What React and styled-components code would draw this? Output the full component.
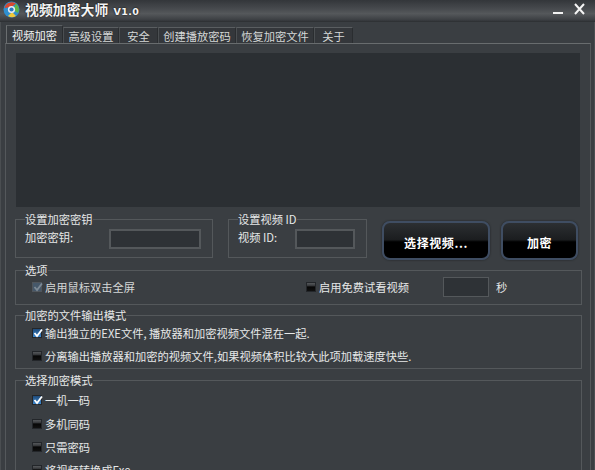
import React from "react";
import styled, { createGlobalStyle } from "styled-components";

const GlobalStyle = createGlobalStyle`
  html, body {
    margin: 0;
    padding: 0;
    background: #3a3e42;
  }
  body {
    width: 595px;
    height: 470px;
    overflow: hidden;
    font-family: "Noto Sans CJK SC", "Liberation Sans", sans-serif;
  }
`;

const Window = styled.div`
  width: 595px;
  height: 470px;
  overflow: hidden;
  background: #3a3e42;
  color: #e6e8e8;
  font-size: 11.25px;
`;

const TitleBar = styled.div`
  height: 22px;
  display: flex;
  align-items: flex-start;
  padding: 1px 0 0 3px;
  box-sizing: border-box;
  background: linear-gradient(#33363a 0, #474a4e 40%, #55585b 62%, #3c3f43 90%, #2b2e31 100%);
`;

const Title = styled.div`
  margin-left: 5px;
  font-size: 13.8px;
  line-height: 17px;
  font-weight: 700;
  letter-spacing: 0.1px;
  color: #f4f4f4;
  text-shadow: 0 0 2px #000;
  span {
    font-family: "DejaVu Sans", sans-serif;
    font-size: 9.5px;
    letter-spacing: 0.4px;
    margin-left: 5px;
  }
`;

const WindowButtons = styled.div`
  margin-left: auto;
  display: flex;
  align-items: flex-end;
  gap: 11px;
  padding: 2px 10px 0 0;
`;

const Body = styled.div`
  padding: 3px 4px 0 5px;
  box-shadow: inset 2px 0 0 -1px #4a4e51, inset -2px 0 0 -1px #4a4e51;
`;

const Tabs = styled.div`
  display: flex;
  align-items: flex-end;
  height: 18px;
  padding-left: 1px;
`;

const Tab = styled.div`
  height: ${(p) => (p.$active ? "18px" : "16px")};
  width: ${(p) => p.$w}px;
  box-sizing: border-box;
  display: flex;
  align-items: center;
  justify-content: center;
  font-size: 11.25px;
  white-space: nowrap;
  color: ${(p) => (p.$active ? "#f2f2f2" : "#d5d7d7")};
  background: ${(p) => (p.$active ? "#383c40" : "#34373b")};
  border: 1px solid #5a5e61;
  border-bottom: none;
  border-left-color: ${(p) => (p.$active ? "#6a6e70" : "#4b4f52")};
  border-right-color: #2a2d30;
`;

const Page = styled.div`
  height: 440px;
  box-sizing: border-box;
  border: 1px solid #54585b;
  border-top-color: #686c6e;
  border-bottom: none;
  padding: 9px 8px 0 9px;
`;

const Screen = styled.div`
  height: 154px;
  margin: 0 2px 0 1px;
  background: #2b2f33;
`;

const TopRow = styled.div`
  display: flex;
  align-items: flex-start;
  margin-top: 5px;
`;

const Group = styled.fieldset`
  margin: 0;
  min-width: 0;
  box-sizing: border-box;
  width: ${(p) => (p.$w ? `${p.$w}px` : "auto")};
  height: ${(p) => p.$h}px;
  margin-left: ${(p) => p.$ml || 0}px;
  margin-top: ${(p) => p.$mt || 0}px;
  border: 1px solid #54585b;
  padding: 0 0 0 9px;
  legend {
    padding: 0;
    margin-left: 0;
    font-size: 11.25px;
    line-height: 14px;
    color: #e6e8e8;
  }
`;

const Field = styled.div`
  display: flex;
  align-items: center;
  height: 22px;
`;

const FieldLabel = styled.div`
  width: ${(p) => p.$w}px;
  flex: none;
  white-space: nowrap;
  font-size: 11.25px;
`;

const Input = styled.div`
  width: ${(p) => p.$w}px;
  height: 20px;
  flex: none;
  box-sizing: border-box;
  background: #2e3236;
  border: ${(p) => (p.$thin ? 1 : 2)}px solid #54585b;
  margin-top: ${(p) => p.$mt || 0}px;
`;

const BigButton = styled.div`
  width: ${(p) => p.$w}px;
  height: 39px;
  flex: none;
  margin-left: ${(p) => p.$ml}px;
  margin-top: 9px;
  padding-top: 3px;
  box-sizing: border-box;
  display: flex;
  align-items: center;
  justify-content: center;
  border-radius: 8px;
  border: 2px solid #3f4d62;
  background: linear-gradient(#2c2f32 0, #1b1d1f 48%, #000 54%, #000 100%);
  color: #fff;
  font-size: 12px;
  font-weight: 700;
  letter-spacing: 0.6px;
  box-shadow: 0 0 2px #1c1e20;
`;

const OptionRow = styled.div`
  display: flex;
  align-items: center;
  height: ${(p) => p.$h || 23}px;
  white-space: nowrap;
  padding-left: 7px;
  font-size: 11.25px;
`;

const Label = styled.span`
  margin-left: 3px;
  color: ${(p) => (p.$dim ? "#d5d7d7" : "#e6e8e8")};
`;

const Box = styled.span`
  width: 10px;
  height: 10px;
  flex: none;
  position: relative;
  box-sizing: border-box;
  margin-left: ${(p) => p.$ml || 0}px;
  background: ${(p) =>
    p.$disabled
      ? "#46586a"
      : p.$checked
      ? "linear-gradient(#1f4a78, #3f8ad0)"
      : "linear-gradient(#55585b 0, #3b3d40 30%, #070707 50%, #111 100%)"};
  border: 1px solid ${(p) => (p.$disabled ? "#50565c" : "#23262a")};
  svg {
    position: absolute;
    left: -1px;
    top: -2px;
  }
`;

const Seconds = styled.span`
  margin-left: 34px;
  display: flex;
  align-items: center;
  gap: 7px;
`;

const Check = ({ checked, disabled, ml }) => (
  <Box $checked={checked} $disabled={disabled} $ml={ml}>
    {checked && (
      <svg width="12" height="12" viewBox="0 0 12 12" fill="none">
        <path
          d="M2.5 6 L5 9 L10 2.5"
          stroke={disabled ? "#7d8a96" : "#fff"}
          strokeWidth="1.8"
        />
      </svg>
    )}
  </Box>
);

const AppIcon = () => (
  <svg width="17" height="17" viewBox="0 0 17 17">
    <circle cx="8.5" cy="8.5" r="8" fill="#2f8fd0" />
    <path d="M1.5 7 A7.5 7.5 0 0 1 13 2.5 L8.5 6 Z" fill="#d9482f" />
    <path d="M13 2.5 A7.5 7.5 0 0 1 15 12 L10 9 Z" fill="#5fb548" />
    <path d="M5 15 A7.5 7.5 0 0 0 13 15 L9 11 Z" fill="#f0c93a" />
    <circle cx="8.5" cy="8.5" r="3.6" fill="#e8eef2" />
    <circle cx="8.5" cy="8.5" r="2.1" fill="#2a78c0" />
  </svg>
);

const tabs = [
  { label: "视频加密", active: true, w: 57 },
  { label: "高级设置", w: 56 },
  { label: "安全", w: 39 },
  { label: "创建播放密码", w: 78 },
  { label: "恢复加密文件", w: 78 },
  { label: "关于", w: 39 },
];

const App = () => {
  return (
    <Window>
      <GlobalStyle />
      <TitleBar>
        <AppIcon />
        <Title>
          视频加密大师<span>V1.0</span>
        </Title>
        <WindowButtons>
          <svg width="10" height="4" viewBox="0 0 10 4">
            <rect y="1" width="10" height="2" fill="#f2f2f2" />
          </svg>
          <svg width="11" height="12" viewBox="0 0 11 12">
            <path d="M1 1 L10 11 M10 1 L1 11" stroke="#f4f4f4" strokeWidth="2" />
          </svg>
        </WindowButtons>
      </TitleBar>

      <Body>
        <Tabs>
          {tabs.map((t) => (
            <Tab key={t.label} $active={t.active} $w={t.w}>
              {t.label}
            </Tab>
          ))}
        </Tabs>
        <Page>
          <Screen />
          <TopRow>
            <Group $w={198} $h={46}>
              <legend>设置加密密钥</legend>
              <Field>
                <FieldLabel $w={84}>加密密钥:</FieldLabel>
                <Input $w={92} $mt={4} />
              </Field>
            </Group>
            <Group $w={139} $h={46} $ml={15}>
              <legend>设置视频 ID</legend>
              <Field>
                <FieldLabel $w={57}>视频 ID:</FieldLabel>
                <Input $w={60} $mt={4} />
              </Field>
            </Group>
            <BigButton $w={108} $ml={15}>
              选择视频...
            </BigButton>
            <BigButton $w={77} $ml={11}>
              加密
            </BigButton>
          </TopRow>

          <Group $h={42} $mt={3}>
            <legend>选项</legend>
            <OptionRow $h={20}>
              <Check checked disabled />
              <Label $dim>启用鼠标双击全屏</Label>
              <Check ml={171} />
              <Label>启用免费试看视频</Label>
              <Seconds>
                <Input $w={46} $thin />
                秒
              </Seconds>
            </OptionRow>
          </Group>

          <Group $h={61} $mt={3}>
            <legend>加密的文件输出模式</legend>
            <OptionRow $h={21}>
              <Check checked />
              <Label>输出独立的EXE文件, 播放器和加密视频文件混在一起.</Label>
            </OptionRow>
            <OptionRow $h={25}>
              <Check />
              <Label>分离输出播放器和加密的视频文件,如果视频体积比较大此项加载速度快些.</Label>
            </OptionRow>
          </Group>

          <Group $h={120} $mt={4}>
            <legend>选择加密模式</legend>
            <OptionRow $h={25}>
              <Check checked />
              <Label>一机一码</Label>
            </OptionRow>
            <OptionRow>
              <Check />
              <Label>多机同码</Label>
            </OptionRow>
            <OptionRow>
              <Check />
              <Label>只需密码</Label>
            </OptionRow>
            <OptionRow>
              <Check />
              <Label>将视频转换成Exe</Label>
            </OptionRow>
          </Group>
        </Page>
      </Body>
    </Window>
  );
};

export default App;
